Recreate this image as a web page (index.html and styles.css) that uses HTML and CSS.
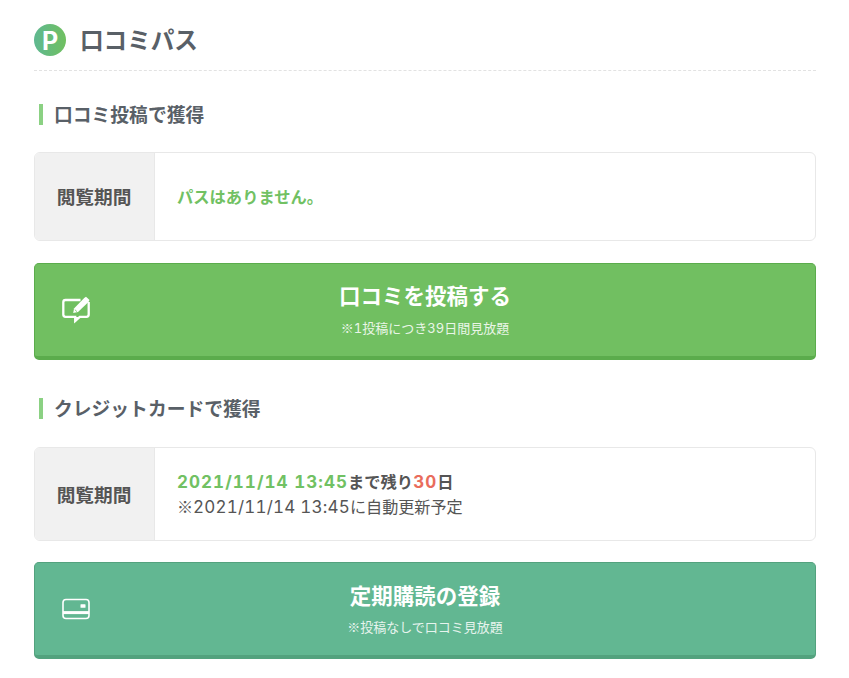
FILE: index.html
```
<!DOCTYPE html>
<html lang="ja">
<head>
    <meta charset="UTF-8">
    <meta name="viewport" content="width=device-width, initial-scale=1.0">
    <title>口コミパス</title>
    <link rel="stylesheet" href="styles.css">
</head>
<body>
    <main class="pass">
        <h1 class="pass-title">
            <span class="pass-icon">P</span>
            <span>口コミパス</span>
        </h1>

        <!-- 口コミ投稿 -->
        <section>
            <h2 class="heading">口コミ投稿で獲得</h2>
            <dl class="period">
                <dt>閲覧期間</dt>
                <dd><p class="status green">パスはありません。</p></dd>
            </dl>
            <a class="btn btn-post" href="#">
                <svg class="btn-icon" viewBox="0 0 28 28" fill="none">
                    <path d="M18.5 4H3.5Q1.3 4 1.3 6.2V18.5Q1.3 20.8 3.5 20.8H13.2V25L17.8 20.8H24.5Q26.7 20.8 26.7 18.5V6" stroke="#fff" stroke-width="2.3"/>
                    <path d="M13.2 21H18L13.2 26.4Z" fill="#fff"/>
                    <path d="M12 12.5L22.2 2L24 .8L27.5 4L26.5 6L16 16L11.2 17Z" fill="#fff"/>
                    <path d="M12.8 13.6L15 15.7" stroke="#71bf61" stroke-width=".8"/>
                </svg>
                <span class="btn-main">口コミを投稿する</span>
                <span class="btn-note">※<span class="num">1</span>投稿につき<span class="num">39</span>日間見放題</span>
            </a>
        </section>

        <!-- クレジットカード -->
        <section class="card">
            <h2 class="heading">クレジットカードで獲得</h2>
            <dl class="period period-card">
                <dt>閲覧期間</dt>
                <dd>
                    <p class="status"><span class="date green">2021/11/14 13:45</span>まで残り<span class="days">30</span>日</p>
                    <p class="renew">※<span class="date">2021/11/14 13:45</span>に自動更新予定</p>
                </dd>
            </dl>
            <a class="btn btn-card" href="#">
                <svg class="btn-icon" viewBox="0 0 28 28" fill="none">
                    <rect x="1" y="4.5" width="26" height="19" rx="3" stroke="#fff" stroke-width="1.6"/>
                    <path d="M1 17.6H27" stroke="#fff" stroke-width="3"/>
                    <rect x="18.5" y="9.2" width="5" height="3.6" rx=".6" fill="#fff"/>
                </svg>
                <span class="btn-main">定期購読の登録</span>
                <span class="btn-note">※投稿なしで口コミ見放題</span>
            </a>
        </section>
    </main>
</body>
</html>
```
FILE: styles.css
```
* {
    box-sizing: border-box;
}
body {
    margin: 0;
    background-color: #fff;
    color: #555;
    font-family: "Noto Sans CJK JP", sans-serif;
}
h1, h2, p, dl, dd {
    margin: 0;
}
.pass {
    width: 782px;
    margin-left: 34px;
    padding-top: 20px;
}
.pass-title {
    display: flex;
    height: 51px;
    border-bottom: 1px dashed #e2e2e2;
    color: #596067;
    font-size: 23.6px;
    line-height: 38px;
}
.pass-icon {
    width: 32px;
    height: 32px;
    margin: 4px 14px 0 0;
    border-radius: 50%;
    background: linear-gradient(90deg, #5fb891, #70c060);
    color: #fff;
    font: bold 25px/35px Inter, sans-serif;
    text-align: center;
}
.heading {
    display: flex;
    align-items: center;
    height: 22px;
    margin: 32px 0 27px 5px;
    color: #596067;
    font-size: 18.8px;
    line-height: 22px;
}
.heading::before {
    content: "";
    width: 4px;
    height: 21px;
    margin-right: 11px;
    background-color: #8bd183;
}
.period {
    display: flex;
    height: 89px;
    margin-bottom: 22px;
    border: 1px solid #e8e8e8;
    border-radius: 6px;
    overflow: hidden;
}
.period dt {
    display: flex;
    align-items: center;
    justify-content: center;
    width: 120px;
    padding: 0 1px 2px 0;
    border-right: 1px solid #e8e8e8;
    background-color: #f1f1f1;
    font-size: 18.7px;
    font-weight: bold;
}
.period dd {
    display: flex;
    flex-direction: column;
    justify-content: center;
    padding-left: 22px;
}
.status {
    font-size: 16.3px;
    font-weight: bold;
    line-height: 25px;
}
.renew {
    font-size: 16.1px;
    line-height: 25px;
}
.green {
    color: #71c163;
}
.date, .days, .num {
    font-family: Inter, sans-serif;
    font-feature-settings: "tnum";
}
.date, .days {
    font-size: 17px;
    line-height: 1;
    letter-spacing: 1.05px;
}
.renew .date {
    letter-spacing: .2px;
}
.days {
    color: #e96c5c;
}
.btn {
    display: flex;
    flex-direction: column;
    align-items: center;
    position: relative;
    height: 97px;
    padding-top: 15px;
    border: 1px solid;
    border-bottom-width: 4px;
    border-radius: 5px;
    color: #fff;
    text-decoration: none;
}
.btn-post {
    background-color: #71bf61;
    border-color: #5bac4c;
}
.btn-card {
    padding-top: 16px;
    background-color: #62b792;
    border-color: #53a27e;
}
.btn-icon {
    position: absolute;
    top: 32px;
    left: 27px;
    width: 28px;
    height: 28px;
}
.btn-main {
    font-size: 21.5px;
    font-weight: bold;
    line-height: 32px;
}
.btn-note {
    margin-top: 7px;
    font-size: 13px;
    line-height: 20px;
    opacity: .85;
}
.card .heading {
    margin-top: 37px;
    margin-bottom: 28px;
}
.btn-card .btn-note {
    margin-top: 6px;
}
.period-card {
    height: 94px;
    margin-bottom: 21px;
}
```
